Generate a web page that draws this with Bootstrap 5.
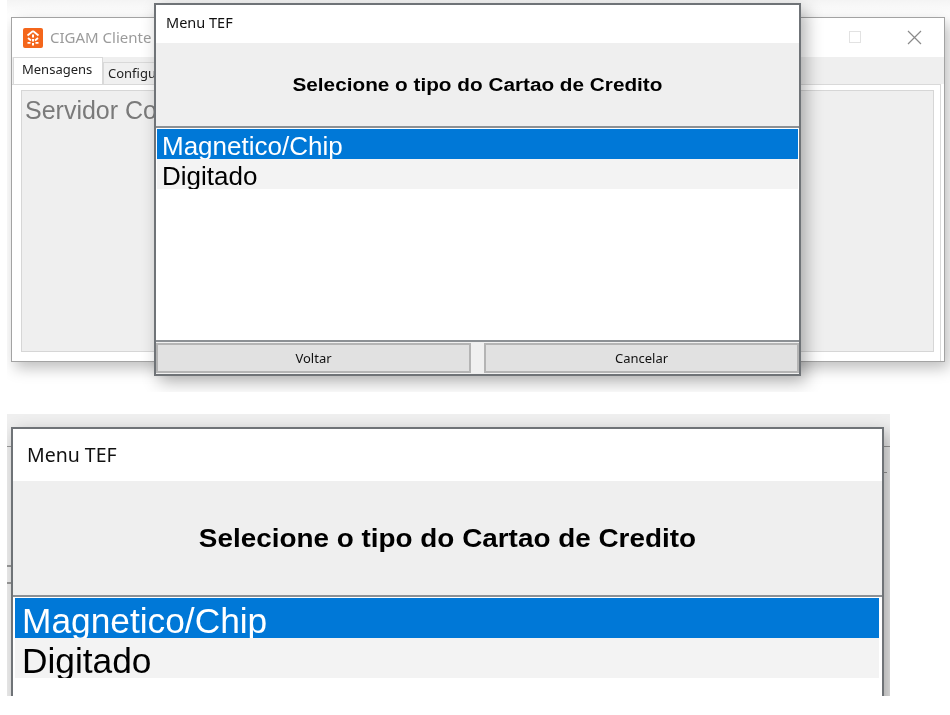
<!DOCTYPE html>
<html lang="pt">
<head>
    <meta charset="UTF-8">
    <title>Menu TEF</title>
    <link href="https://cdn.jsdelivr.net/npm/bootstrap@5.3.2/dist/css/bootstrap.min.css" rel="stylesheet">
    <style>
        html, body { background: #fff; height: 715px; overflow: hidden; }
        body { position: relative; font-family: "Liberation Sans", Arial, sans-serif; }

        /* recortes das duas capturas */
        .shot { position: absolute; overflow: hidden; filter: blur(.35px); }
        .shot-top { left: 7px; top: 0; width: 943px; height: 392px; background: linear-gradient(#f4f4f4, #fff 16px); }
        .shot-bottom { left: 7px; top: 414px; width: 883px; height: 282px; background: #efefef; }
        .shot-bottom .edge { position: absolute; background: #9a9a9a; }
        .edge-a { top: 32px; left: 0; right: 0; height: 1px; }
        .edge-b { top: 58px; right: 3px; width: 3px; height: 1px; }
        .edge-c { top: 151px; left: 0; width: 4px; height: 2px; }
        .edge-d { top: 168px; left: 0; width: 4px; height: 2px; }

        /* janela de tras */
        .back-win { position: absolute; left: 4px; top: 17px; width: 934px; height: 345px; background: #fff; border: 1px solid #a3a3a3; box-shadow: 4px 6px 14px rgba(0,0,0,.26); }
        .back-title { height: 39px; padding-left: 11px; color: #9b9b9b; font-family: "Noto Sans", sans-serif; font-size: 15px; }
        .back-logo { width: 20px; height: 20px; margin-right: 7px; }
        .back-ctrl { position: absolute; top: 12px; left: 0; right: 0; height: 14px; }
        .ctrl-max { position: absolute; left: 837px; top: 1px; width: 12px; height: 12px; border: 1px solid #e2e2e2; }
        .ctrl-x { position: absolute; left: 895px; top: 0; width: 15px; height: 15px; }
        .tab-row { height: 27px; background: #efefef; padding-left: 1px; }
        .tab-on { width: 90px; height: 27px; background: #fff; border: 1px solid #d9d9d9; border-bottom: 0; font-size: 13px; font-family: "Noto Sans", sans-serif; color: #222; padding: 2px 0 0 8px; }
        .tab-off { width: 60px; height: 22px; margin-top: 5px; background: #f0f0f0; border: 1px solid #d9d9d9; border-bottom: 0; font-size: 13px; font-family: "Noto Sans", sans-serif; color: #222; padding: 1px 0 0 4px; white-space: nowrap; }
        .tab-page { height: 277px; background: #fff; border-top: 1px solid #d9d9d9; border-right: 1px solid #d9d9d9; margin-right: 3px; padding: 5px 6px 9px 9px; }
        .msg-box { height: 100%; background: #efefef; border: 1px solid #d6d6d6; color: #7a7a7a; font-size: 25px; padding: 4px 0 0 3px; line-height: 30px; }

        /* janela Menu TEF */
        .tef-win { position: absolute; background: #fff; border: 2px solid #6f7377; box-shadow: 5px 6px 16px rgba(0,0,0,.3); }
        .tef-title { color: #111; font-family: "Noto Sans", sans-serif; }
        .tef-head { background: #efefef; border-bottom: 2px solid #8c9094; color: #000; font-weight: 700; }
        .tef-head span { display: inline-block; transform: scaleX(1.098); }
        .tef-list { background: #fff; padding: 1px 1px 0 1px; }
        .tef-list .list-group-item { border: 0; border-radius: 0; padding: 0 0 0 5px; overflow: hidden; color: #000; background: #f3f3f3; white-space: nowrap; }
        .tef-list .list-group-item.active { background: #0078d7; color: #fff; }

        .tef-sm { left: 147px; top: 3px; width: 647px; height: 373px; }
        .tef-sm .tef-title { height: 38px; padding: 0 0 2px 10px; font-size: 14.5px; }
        .tef-sm .tef-head { height: 85px; font-size: 18.9px; padding-top: 2px; }
        .tef-sm .tef-list { height: 212px; }
        .tef-sm .list-group-item { height: 30px; font-size: 26px; line-height: 34px; }
        .tef-foot { height: 34px; background: #f0f0f0; border-top: 2px solid #8c9094; padding: 1px 0; gap: 13px; }
        .tef-foot .btn { flex: 1; border-radius: 0; background: #e1e1e1; border: 2px solid #b4b4b4; color: #111; font-size: 13px; font-family: "Noto Sans", sans-serif; padding: 2px 0 0; }

        .tef-lg { left: 4px; top: 13px; width: 873px; height: 300px; }
        .tef-lg .tef-title { height: 52px; padding-left: 14px; font-size: 19.5px; }
        .tef-lg .tef-head { height: 116px; font-size: 25.4px; }
        .tef-lg .tef-list { padding: 1px 3px 0 2px; }
        .tef-lg .list-group-item { height: 40px; font-size: 35.3px; line-height: 46px; padding-left: 7px; }
    </style>
</head>
<body>

<div class="shot shot-top">
    <div class="back-win">
        <div class="back-title d-flex align-items-center">
            <svg class="back-logo" viewBox="0 0 20 20">
                <rect width="20" height="20" rx="2" fill="#f4661b"/>
                <path d="M10 3 4.500 7.500M10 3l5.500 4.500M5 10l3 2.500M15 10l-3 2.500" stroke="#fff" stroke-width="1.800" fill="none"/>
                <path d="M9 6.500h2v3H9zM9 11h2v2.500H9zM9 15h2v2.500H9zM4.500 14h3v1.800h-3zM12.500 14h3v1.800h-3z" fill="#fff"/>
            </svg>
            CIGAM Cliente
        </div>
        <div class="back-ctrl">
            <span class="ctrl-max"></span>
            <svg class="ctrl-x" viewBox="0 0 15 15"><path d="M1 1l13 13M14 1 1 14" stroke="#8a8a8a" stroke-width="1.200"/></svg>
        </div>
        <div class="tab-row d-flex">
            <div class="tab-on">Mensagens</div>
            <div class="tab-off">Configu</div>
        </div>
        <div class="tab-page">
            <div class="msg-box">Servidor Co</div>
        </div>
    </div>

    <div class="tef-win tef-sm d-flex flex-column">
        <div class="tef-title d-flex align-items-center">Menu TEF</div>
        <div class="tef-head d-flex align-items-center justify-content-center"><span>Selecione o tipo do Cartao de Credito</span></div>
        <div class="tef-list list-group list-group-flush">
            <div class="list-group-item active">Magnetico/Chip</div>
            <div class="list-group-item">Digitado</div>
        </div>
        <div class="tef-foot d-flex">
            <button class="btn" type="button">Voltar</button>
            <button class="btn" type="button">Cancelar</button>
        </div>
    </div>
</div>

<div class="shot shot-bottom">
    <div class="edge edge-a"></div>
    <div class="edge edge-b"></div>
    <div class="edge edge-c"></div>
    <div class="edge edge-d"></div>
    <div class="tef-win tef-lg d-flex flex-column">
        <div class="tef-title d-flex align-items-center">Menu TEF</div>
        <div class="tef-head d-flex align-items-center justify-content-center"><span>Selecione o tipo do Cartao de Credito</span></div>
        <div class="tef-list list-group list-group-flush">
            <div class="list-group-item active">Magnetico/Chip</div>
            <div class="list-group-item">Digitado</div>
        </div>
    </div>
</div>

<script src="https://cdn.jsdelivr.net/npm/bootstrap@5.3.2/dist/js/bootstrap.bundle.min.js"></script>
</body>
</html>
